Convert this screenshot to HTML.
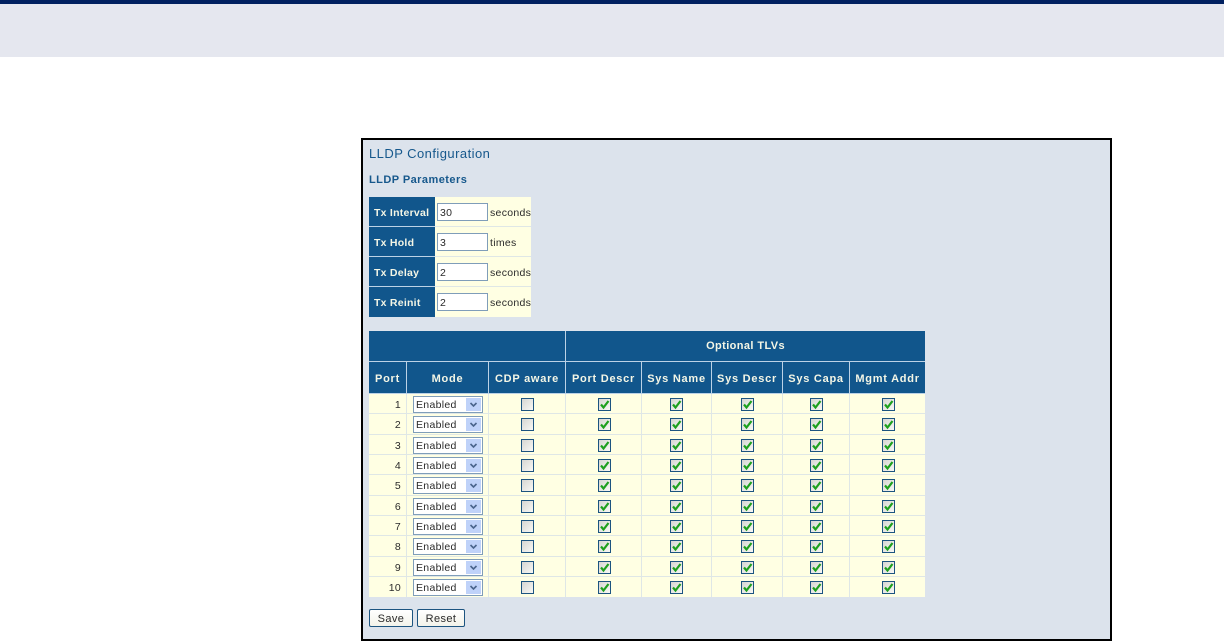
<!DOCTYPE html>
<html><head><meta charset="utf-8"><title>LLDP Configuration</title>
<style>
html,body{margin:0;padding:0;background:#fff}
body{width:1224px;height:641px;overflow:hidden;position:relative;font-family:"Liberation Sans",sans-serif;font-size:10.5px;color:#2a2a2a}
.top{position:absolute;left:0;top:0;width:1224px;height:4px;background:#002060}
.band{position:absolute;left:0;top:4px;width:1224px;height:53px;background:#e5e7ef}
.frame{position:absolute;left:361px;top:138px;width:747px;height:499px;border:2px solid #000;background:#dce3ec}
.t{position:absolute;white-space:nowrap;color:#16588c}
table{position:absolute;border-collapse:separate;border-spacing:0;table-layout:fixed;background:#ffffe3}
td,th{padding:0;box-sizing:border-box;overflow:hidden;white-space:nowrap}
th{background:#11568c;color:#f4f6e6;font-weight:bold;font-size:11px;letter-spacing:.75px;text-align:center;border-right:1px solid #bcd2e6;border-bottom:1px solid #bcd2e6;padding-top:2px}
th:last-child{border-right:0}
th.o{letter-spacing:.4px;padding-top:0}
td{border-right:1px solid #dfe7e6;border-bottom:1px solid #dfe7e6;text-align:center;position:relative;letter-spacing:.3px;vertical-align:top}
td:last-child{border-right:0}
tr:last-child td{border-bottom:0}
#a th{text-align:left;padding:2px 0 0 5px;border-right:0;letter-spacing:.25px;font-size:10.5px}
#a tr:last-child th{border-bottom:0}
#a td{text-align:left;border-right:0}
.i{position:absolute;left:2px;top:6px;width:51px;height:18px;box-sizing:border-box;border:1px solid #7f9db9;background:#fff;padding:3px 0 0 2px;font-size:10.5px;line-height:13px}
.u{position:absolute;left:55px;top:10px;line-height:12px}
.n{text-align:right;padding:5px 5px 0 0;line-height:12px}
.s{position:absolute;left:6px;top:2px;width:70px;height:17px;box-sizing:border-box;border:1px solid #7f9db9;background:#fff;text-align:left;padding-left:2px;line-height:17px}
.s svg{position:absolute;right:1px;top:1px;width:15px;height:13px;background:#bfd2f9}
.c{position:relative;display:block;width:13px;height:13px;box-sizing:border-box;border:1px solid #1c5480;background:linear-gradient(135deg,#d6d6d2,#f8f8f5);margin:4px auto 0}
#b td:nth-child(4) .c,#b td:nth-child(8) .c{left:1px}
.c svg{position:absolute;left:0;top:0;width:11px;height:11px}
.b{position:absolute;top:609px;height:18px;box-sizing:border-box;border:1px solid #1c5480;border-radius:2px;background:linear-gradient(#fff,#f3f3ea);text-align:center;line-height:18px;color:#2a2a2a;font-size:11px;letter-spacing:.4px}
</style></head><body>
<div class="top"></div><div class="band"></div>
<div class="frame"></div>
<div class="t" style="left:369px;top:146px;font-size:13px;line-height:15px;letter-spacing:.45px">LLDP Configuration</div>
<div class="t" style="left:369px;top:174px;font-size:11px;line-height:13px;font-weight:bold;letter-spacing:.45px">LLDP Parameters</div>

<table id="a" style="left:369px;top:197px;width:162px">
<colgroup><col style="width:66px"><col style="width:96px"></colgroup>
<tr style="height:30px"><th>Tx Interval</th><td><div class="i">30</div><span class="u">seconds</span></td></tr>
<tr style="height:30px"><th>Tx Hold</th><td><div class="i">3</div><span class="u">times</span></td></tr>
<tr style="height:30px"><th>Tx Delay</th><td><div class="i">2</div><span class="u">seconds</span></td></tr>
<tr style="height:30px"><th>Tx Reinit</th><td><div class="i">2</div><span class="u">seconds</span></td></tr>
</table>

<table id="b" style="left:369px;top:331px;width:556px">
<colgroup><col style="width:38px"><col style="width:82px"><col style="width:77px"><col style="width:76px"><col style="width:70px"><col style="width:71px"><col style="width:67px"><col style="width:75px"></colgroup>
<tr style="height:31px"><th colspan="3" class="o"></th><th colspan="5" class="o">Optional TLVs</th></tr>
<tr style="height:32px"><th>Port</th><th>Mode</th><th>CDP aware</th><th>Port Descr</th><th>Sys Name</th><th>Sys Descr</th><th>Sys Capa</th><th>Mgmt Addr</th></tr>
<tr style="height:20px"><td class="n">1</td><td><div class="s">Enabled<svg viewBox="0 0 15 13"><path d="M4.5 5l3 3 3-3" fill="none" stroke="#4a648c" stroke-width="1.6"/></svg></div></td><td><span class="c"></span></td><td><span class="c"><svg viewBox="0 0 11 11"><path d="M2 5.5l2.5 3L9.5 2" fill="none" stroke="#1ea01e" stroke-width="2.2"/></svg></span></td><td><span class="c"><svg viewBox="0 0 11 11"><path d="M2 5.5l2.5 3L9.5 2" fill="none" stroke="#1ea01e" stroke-width="2.2"/></svg></span></td><td><span class="c"><svg viewBox="0 0 11 11"><path d="M2 5.5l2.5 3L9.5 2" fill="none" stroke="#1ea01e" stroke-width="2.2"/></svg></span></td><td><span class="c"><svg viewBox="0 0 11 11"><path d="M2 5.5l2.5 3L9.5 2" fill="none" stroke="#1ea01e" stroke-width="2.2"/></svg></span></td><td><span class="c"><svg viewBox="0 0 11 11"><path d="M2 5.5l2.5 3L9.5 2" fill="none" stroke="#1ea01e" stroke-width="2.2"/></svg></span></td></tr>
<tr style="height:21px"><td class="n">2</td><td><div class="s">Enabled<svg viewBox="0 0 15 13"><path d="M4.5 5l3 3 3-3" fill="none" stroke="#4a648c" stroke-width="1.6"/></svg></div></td><td><span class="c"></span></td><td><span class="c"><svg viewBox="0 0 11 11"><path d="M2 5.5l2.5 3L9.5 2" fill="none" stroke="#1ea01e" stroke-width="2.2"/></svg></span></td><td><span class="c"><svg viewBox="0 0 11 11"><path d="M2 5.5l2.5 3L9.5 2" fill="none" stroke="#1ea01e" stroke-width="2.2"/></svg></span></td><td><span class="c"><svg viewBox="0 0 11 11"><path d="M2 5.5l2.5 3L9.5 2" fill="none" stroke="#1ea01e" stroke-width="2.2"/></svg></span></td><td><span class="c"><svg viewBox="0 0 11 11"><path d="M2 5.5l2.5 3L9.5 2" fill="none" stroke="#1ea01e" stroke-width="2.2"/></svg></span></td><td><span class="c"><svg viewBox="0 0 11 11"><path d="M2 5.5l2.5 3L9.5 2" fill="none" stroke="#1ea01e" stroke-width="2.2"/></svg></span></td></tr>
<tr style="height:20px"><td class="n">3</td><td><div class="s">Enabled<svg viewBox="0 0 15 13"><path d="M4.5 5l3 3 3-3" fill="none" stroke="#4a648c" stroke-width="1.6"/></svg></div></td><td><span class="c"></span></td><td><span class="c"><svg viewBox="0 0 11 11"><path d="M2 5.5l2.5 3L9.5 2" fill="none" stroke="#1ea01e" stroke-width="2.2"/></svg></span></td><td><span class="c"><svg viewBox="0 0 11 11"><path d="M2 5.5l2.5 3L9.5 2" fill="none" stroke="#1ea01e" stroke-width="2.2"/></svg></span></td><td><span class="c"><svg viewBox="0 0 11 11"><path d="M2 5.5l2.5 3L9.5 2" fill="none" stroke="#1ea01e" stroke-width="2.2"/></svg></span></td><td><span class="c"><svg viewBox="0 0 11 11"><path d="M2 5.5l2.5 3L9.5 2" fill="none" stroke="#1ea01e" stroke-width="2.2"/></svg></span></td><td><span class="c"><svg viewBox="0 0 11 11"><path d="M2 5.5l2.5 3L9.5 2" fill="none" stroke="#1ea01e" stroke-width="2.2"/></svg></span></td></tr>
<tr style="height:20px"><td class="n">4</td><td><div class="s">Enabled<svg viewBox="0 0 15 13"><path d="M4.5 5l3 3 3-3" fill="none" stroke="#4a648c" stroke-width="1.6"/></svg></div></td><td><span class="c"></span></td><td><span class="c"><svg viewBox="0 0 11 11"><path d="M2 5.5l2.5 3L9.5 2" fill="none" stroke="#1ea01e" stroke-width="2.2"/></svg></span></td><td><span class="c"><svg viewBox="0 0 11 11"><path d="M2 5.5l2.5 3L9.5 2" fill="none" stroke="#1ea01e" stroke-width="2.2"/></svg></span></td><td><span class="c"><svg viewBox="0 0 11 11"><path d="M2 5.5l2.5 3L9.5 2" fill="none" stroke="#1ea01e" stroke-width="2.2"/></svg></span></td><td><span class="c"><svg viewBox="0 0 11 11"><path d="M2 5.5l2.5 3L9.5 2" fill="none" stroke="#1ea01e" stroke-width="2.2"/></svg></span></td><td><span class="c"><svg viewBox="0 0 11 11"><path d="M2 5.5l2.5 3L9.5 2" fill="none" stroke="#1ea01e" stroke-width="2.2"/></svg></span></td></tr>
<tr style="height:21px"><td class="n">5</td><td><div class="s">Enabled<svg viewBox="0 0 15 13"><path d="M4.5 5l3 3 3-3" fill="none" stroke="#4a648c" stroke-width="1.6"/></svg></div></td><td><span class="c"></span></td><td><span class="c"><svg viewBox="0 0 11 11"><path d="M2 5.5l2.5 3L9.5 2" fill="none" stroke="#1ea01e" stroke-width="2.2"/></svg></span></td><td><span class="c"><svg viewBox="0 0 11 11"><path d="M2 5.5l2.5 3L9.5 2" fill="none" stroke="#1ea01e" stroke-width="2.2"/></svg></span></td><td><span class="c"><svg viewBox="0 0 11 11"><path d="M2 5.5l2.5 3L9.5 2" fill="none" stroke="#1ea01e" stroke-width="2.2"/></svg></span></td><td><span class="c"><svg viewBox="0 0 11 11"><path d="M2 5.5l2.5 3L9.5 2" fill="none" stroke="#1ea01e" stroke-width="2.2"/></svg></span></td><td><span class="c"><svg viewBox="0 0 11 11"><path d="M2 5.5l2.5 3L9.5 2" fill="none" stroke="#1ea01e" stroke-width="2.2"/></svg></span></td></tr>
<tr style="height:20px"><td class="n">6</td><td><div class="s">Enabled<svg viewBox="0 0 15 13"><path d="M4.5 5l3 3 3-3" fill="none" stroke="#4a648c" stroke-width="1.6"/></svg></div></td><td><span class="c"></span></td><td><span class="c"><svg viewBox="0 0 11 11"><path d="M2 5.5l2.5 3L9.5 2" fill="none" stroke="#1ea01e" stroke-width="2.2"/></svg></span></td><td><span class="c"><svg viewBox="0 0 11 11"><path d="M2 5.5l2.5 3L9.5 2" fill="none" stroke="#1ea01e" stroke-width="2.2"/></svg></span></td><td><span class="c"><svg viewBox="0 0 11 11"><path d="M2 5.5l2.5 3L9.5 2" fill="none" stroke="#1ea01e" stroke-width="2.2"/></svg></span></td><td><span class="c"><svg viewBox="0 0 11 11"><path d="M2 5.5l2.5 3L9.5 2" fill="none" stroke="#1ea01e" stroke-width="2.2"/></svg></span></td><td><span class="c"><svg viewBox="0 0 11 11"><path d="M2 5.5l2.5 3L9.5 2" fill="none" stroke="#1ea01e" stroke-width="2.2"/></svg></span></td></tr>
<tr style="height:20px"><td class="n">7</td><td><div class="s">Enabled<svg viewBox="0 0 15 13"><path d="M4.5 5l3 3 3-3" fill="none" stroke="#4a648c" stroke-width="1.6"/></svg></div></td><td><span class="c"></span></td><td><span class="c"><svg viewBox="0 0 11 11"><path d="M2 5.5l2.5 3L9.5 2" fill="none" stroke="#1ea01e" stroke-width="2.2"/></svg></span></td><td><span class="c"><svg viewBox="0 0 11 11"><path d="M2 5.5l2.5 3L9.5 2" fill="none" stroke="#1ea01e" stroke-width="2.2"/></svg></span></td><td><span class="c"><svg viewBox="0 0 11 11"><path d="M2 5.5l2.5 3L9.5 2" fill="none" stroke="#1ea01e" stroke-width="2.2"/></svg></span></td><td><span class="c"><svg viewBox="0 0 11 11"><path d="M2 5.5l2.5 3L9.5 2" fill="none" stroke="#1ea01e" stroke-width="2.2"/></svg></span></td><td><span class="c"><svg viewBox="0 0 11 11"><path d="M2 5.5l2.5 3L9.5 2" fill="none" stroke="#1ea01e" stroke-width="2.2"/></svg></span></td></tr>
<tr style="height:21px"><td class="n">8</td><td><div class="s">Enabled<svg viewBox="0 0 15 13"><path d="M4.5 5l3 3 3-3" fill="none" stroke="#4a648c" stroke-width="1.6"/></svg></div></td><td><span class="c"></span></td><td><span class="c"><svg viewBox="0 0 11 11"><path d="M2 5.5l2.5 3L9.5 2" fill="none" stroke="#1ea01e" stroke-width="2.2"/></svg></span></td><td><span class="c"><svg viewBox="0 0 11 11"><path d="M2 5.5l2.5 3L9.5 2" fill="none" stroke="#1ea01e" stroke-width="2.2"/></svg></span></td><td><span class="c"><svg viewBox="0 0 11 11"><path d="M2 5.5l2.5 3L9.5 2" fill="none" stroke="#1ea01e" stroke-width="2.2"/></svg></span></td><td><span class="c"><svg viewBox="0 0 11 11"><path d="M2 5.5l2.5 3L9.5 2" fill="none" stroke="#1ea01e" stroke-width="2.2"/></svg></span></td><td><span class="c"><svg viewBox="0 0 11 11"><path d="M2 5.5l2.5 3L9.5 2" fill="none" stroke="#1ea01e" stroke-width="2.2"/></svg></span></td></tr>
<tr style="height:20px"><td class="n">9</td><td><div class="s">Enabled<svg viewBox="0 0 15 13"><path d="M4.5 5l3 3 3-3" fill="none" stroke="#4a648c" stroke-width="1.6"/></svg></div></td><td><span class="c"></span></td><td><span class="c"><svg viewBox="0 0 11 11"><path d="M2 5.5l2.5 3L9.5 2" fill="none" stroke="#1ea01e" stroke-width="2.2"/></svg></span></td><td><span class="c"><svg viewBox="0 0 11 11"><path d="M2 5.5l2.5 3L9.5 2" fill="none" stroke="#1ea01e" stroke-width="2.2"/></svg></span></td><td><span class="c"><svg viewBox="0 0 11 11"><path d="M2 5.5l2.5 3L9.5 2" fill="none" stroke="#1ea01e" stroke-width="2.2"/></svg></span></td><td><span class="c"><svg viewBox="0 0 11 11"><path d="M2 5.5l2.5 3L9.5 2" fill="none" stroke="#1ea01e" stroke-width="2.2"/></svg></span></td><td><span class="c"><svg viewBox="0 0 11 11"><path d="M2 5.5l2.5 3L9.5 2" fill="none" stroke="#1ea01e" stroke-width="2.2"/></svg></span></td></tr>
<tr style="height:20px"><td class="n">10</td><td><div class="s">Enabled<svg viewBox="0 0 15 13"><path d="M4.5 5l3 3 3-3" fill="none" stroke="#4a648c" stroke-width="1.6"/></svg></div></td><td><span class="c"></span></td><td><span class="c"><svg viewBox="0 0 11 11"><path d="M2 5.5l2.5 3L9.5 2" fill="none" stroke="#1ea01e" stroke-width="2.2"/></svg></span></td><td><span class="c"><svg viewBox="0 0 11 11"><path d="M2 5.5l2.5 3L9.5 2" fill="none" stroke="#1ea01e" stroke-width="2.2"/></svg></span></td><td><span class="c"><svg viewBox="0 0 11 11"><path d="M2 5.5l2.5 3L9.5 2" fill="none" stroke="#1ea01e" stroke-width="2.2"/></svg></span></td><td><span class="c"><svg viewBox="0 0 11 11"><path d="M2 5.5l2.5 3L9.5 2" fill="none" stroke="#1ea01e" stroke-width="2.2"/></svg></span></td><td><span class="c"><svg viewBox="0 0 11 11"><path d="M2 5.5l2.5 3L9.5 2" fill="none" stroke="#1ea01e" stroke-width="2.2"/></svg></span></td></tr>
</table>
<div class="b" style="left:369px;width:44px">Save</div>
<div class="b" style="left:417px;width:48px">Reset</div>
</body></html>
